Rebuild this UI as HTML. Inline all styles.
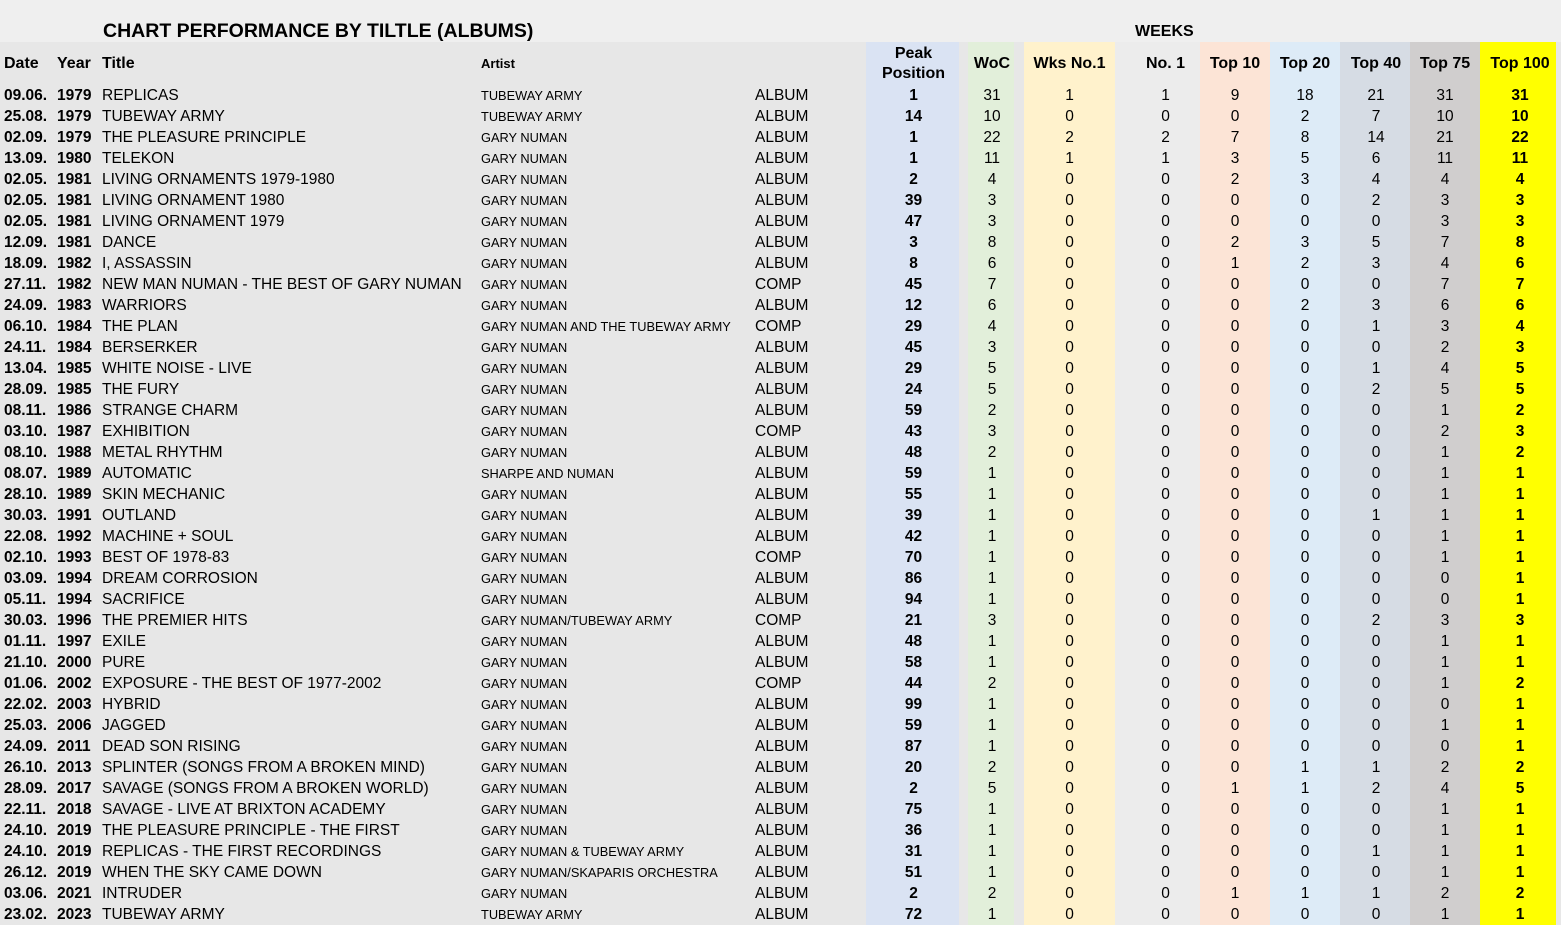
<!DOCTYPE html>
<html><head><meta charset="utf-8">
<style>
html,body{margin:0;padding:0;}
body{width:1561px;height:925px;background:#e7e7e7;position:relative;overflow:hidden;font-family:"Liberation Sans",Arial,sans-serif;color:#000;}
.top{position:absolute;left:0;top:0;width:1561px;height:42px;background:#efefef;}
.ttl{position:absolute;left:103px;top:20px;font-size:19.5px;font-weight:bold;}
.wk{position:absolute;left:1135px;top:23px;font-size:16px;font-weight:bold;}
table{position:absolute;left:0;top:42px;width:1561px;border-collapse:collapse;table-layout:fixed;}
td{padding:0;height:21px;line-height:21px;font-size:15.5px;white-space:nowrap;overflow:visible;text-align:center;}
tr.h td{height:43px;line-height:20px;font-weight:bold;font-size:16px;}
td:nth-child(1){text-align:left;padding-left:4px;font-weight:bold;}
td:nth-child(2){text-align:left;padding-left:2px;font-weight:bold;}
td:nth-child(3){text-align:left;}
td:nth-child(4){text-align:left;font-size:12.8px;}
td:nth-child(5){text-align:left;}
td:nth-child(6){font-weight:bold;padding-left:2px;}
td:nth-child(8){padding-left:2px;}
td:nth-child(11){padding-left:16px;}
td:nth-child(14){padding-left:2px;}
td:nth-child(16){font-weight:bold;padding-left:4px;}
tr.h td:nth-child(4){font-size:13px;}
</style></head><body>
<div class="top"></div>
<div class="ttl">CHART PERFORMANCE BY TILTLE (ALBUMS)</div>
<div class="wk">WEEKS</div>
<table>
<colgroup>
<col style="width:55px"><col style="width:47px"><col style="width:379px"><col style="width:274px"><col style="width:111px">
<col style="width:93px;background:#dae3f3"><col style="width:9px"><col style="width:46px;background:#e2efda"><col style="width:10px">
<col style="width:91px;background:#fff2cc"><col style="width:85px;background:#ececec"><col style="width:70px;background:#fce4d6">
<col style="width:70px;background:#ddebf7"><col style="width:70px;background:#d6dce4"><col style="width:70px;background:#d0cece">
<col style="width:76px;background:#ffff00"><col style="width:5px">
</colgroup>
<tr class="h"><td>Date</td><td>Year</td><td>Title</td><td>Artist</td><td></td><td>Peak<br>Position</td><td></td><td>WoC</td><td></td><td>Wks No.1</td><td>No. 1</td><td>Top 10</td><td>Top 20</td><td>Top 40</td><td>Top 75</td><td>Top 100</td><td></td></tr>
<tr><td>09.06.</td><td>1979</td><td>REPLICAS</td><td>TUBEWAY ARMY</td><td>ALBUM</td><td>1</td><td></td><td>31</td><td></td><td>1</td><td>1</td><td>9</td><td>18</td><td>21</td><td>31</td><td>31</td><td></td></tr>
<tr><td>25.08.</td><td>1979</td><td>TUBEWAY ARMY</td><td>TUBEWAY ARMY</td><td>ALBUM</td><td>14</td><td></td><td>10</td><td></td><td>0</td><td>0</td><td>0</td><td>2</td><td>7</td><td>10</td><td>10</td><td></td></tr>
<tr><td>02.09.</td><td>1979</td><td>THE PLEASURE PRINCIPLE</td><td>GARY NUMAN</td><td>ALBUM</td><td>1</td><td></td><td>22</td><td></td><td>2</td><td>2</td><td>7</td><td>8</td><td>14</td><td>21</td><td>22</td><td></td></tr>
<tr><td>13.09.</td><td>1980</td><td>TELEKON</td><td>GARY NUMAN</td><td>ALBUM</td><td>1</td><td></td><td>11</td><td></td><td>1</td><td>1</td><td>3</td><td>5</td><td>6</td><td>11</td><td>11</td><td></td></tr>
<tr><td>02.05.</td><td>1981</td><td>LIVING ORNAMENTS 1979-1980</td><td>GARY NUMAN</td><td>ALBUM</td><td>2</td><td></td><td>4</td><td></td><td>0</td><td>0</td><td>2</td><td>3</td><td>4</td><td>4</td><td>4</td><td></td></tr>
<tr><td>02.05.</td><td>1981</td><td>LIVING ORNAMENT 1980</td><td>GARY NUMAN</td><td>ALBUM</td><td>39</td><td></td><td>3</td><td></td><td>0</td><td>0</td><td>0</td><td>0</td><td>2</td><td>3</td><td>3</td><td></td></tr>
<tr><td>02.05.</td><td>1981</td><td>LIVING ORNAMENT 1979</td><td>GARY NUMAN</td><td>ALBUM</td><td>47</td><td></td><td>3</td><td></td><td>0</td><td>0</td><td>0</td><td>0</td><td>0</td><td>3</td><td>3</td><td></td></tr>
<tr><td>12.09.</td><td>1981</td><td>DANCE</td><td>GARY NUMAN</td><td>ALBUM</td><td>3</td><td></td><td>8</td><td></td><td>0</td><td>0</td><td>2</td><td>3</td><td>5</td><td>7</td><td>8</td><td></td></tr>
<tr><td>18.09.</td><td>1982</td><td>I, ASSASSIN</td><td>GARY NUMAN</td><td>ALBUM</td><td>8</td><td></td><td>6</td><td></td><td>0</td><td>0</td><td>1</td><td>2</td><td>3</td><td>4</td><td>6</td><td></td></tr>
<tr><td>27.11.</td><td>1982</td><td>NEW MAN NUMAN - THE BEST OF GARY NUMAN</td><td>GARY NUMAN</td><td>COMP</td><td>45</td><td></td><td>7</td><td></td><td>0</td><td>0</td><td>0</td><td>0</td><td>0</td><td>7</td><td>7</td><td></td></tr>
<tr><td>24.09.</td><td>1983</td><td>WARRIORS</td><td>GARY NUMAN</td><td>ALBUM</td><td>12</td><td></td><td>6</td><td></td><td>0</td><td>0</td><td>0</td><td>2</td><td>3</td><td>6</td><td>6</td><td></td></tr>
<tr><td>06.10.</td><td>1984</td><td>THE PLAN</td><td>GARY NUMAN AND THE TUBEWAY ARMY</td><td>COMP</td><td>29</td><td></td><td>4</td><td></td><td>0</td><td>0</td><td>0</td><td>0</td><td>1</td><td>3</td><td>4</td><td></td></tr>
<tr><td>24.11.</td><td>1984</td><td>BERSERKER</td><td>GARY NUMAN</td><td>ALBUM</td><td>45</td><td></td><td>3</td><td></td><td>0</td><td>0</td><td>0</td><td>0</td><td>0</td><td>2</td><td>3</td><td></td></tr>
<tr><td>13.04.</td><td>1985</td><td>WHITE NOISE - LIVE</td><td>GARY NUMAN</td><td>ALBUM</td><td>29</td><td></td><td>5</td><td></td><td>0</td><td>0</td><td>0</td><td>0</td><td>1</td><td>4</td><td>5</td><td></td></tr>
<tr><td>28.09.</td><td>1985</td><td>THE FURY</td><td>GARY NUMAN</td><td>ALBUM</td><td>24</td><td></td><td>5</td><td></td><td>0</td><td>0</td><td>0</td><td>0</td><td>2</td><td>5</td><td>5</td><td></td></tr>
<tr><td>08.11.</td><td>1986</td><td>STRANGE CHARM</td><td>GARY NUMAN</td><td>ALBUM</td><td>59</td><td></td><td>2</td><td></td><td>0</td><td>0</td><td>0</td><td>0</td><td>0</td><td>1</td><td>2</td><td></td></tr>
<tr><td>03.10.</td><td>1987</td><td>EXHIBITION</td><td>GARY NUMAN</td><td>COMP</td><td>43</td><td></td><td>3</td><td></td><td>0</td><td>0</td><td>0</td><td>0</td><td>0</td><td>2</td><td>3</td><td></td></tr>
<tr><td>08.10.</td><td>1988</td><td>METAL RHYTHM</td><td>GARY NUMAN</td><td>ALBUM</td><td>48</td><td></td><td>2</td><td></td><td>0</td><td>0</td><td>0</td><td>0</td><td>0</td><td>1</td><td>2</td><td></td></tr>
<tr><td>08.07.</td><td>1989</td><td>AUTOMATIC</td><td>SHARPE AND NUMAN</td><td>ALBUM</td><td>59</td><td></td><td>1</td><td></td><td>0</td><td>0</td><td>0</td><td>0</td><td>0</td><td>1</td><td>1</td><td></td></tr>
<tr><td>28.10.</td><td>1989</td><td>SKIN MECHANIC</td><td>GARY NUMAN</td><td>ALBUM</td><td>55</td><td></td><td>1</td><td></td><td>0</td><td>0</td><td>0</td><td>0</td><td>0</td><td>1</td><td>1</td><td></td></tr>
<tr><td>30.03.</td><td>1991</td><td>OUTLAND</td><td>GARY NUMAN</td><td>ALBUM</td><td>39</td><td></td><td>1</td><td></td><td>0</td><td>0</td><td>0</td><td>0</td><td>1</td><td>1</td><td>1</td><td></td></tr>
<tr><td>22.08.</td><td>1992</td><td>MACHINE + SOUL</td><td>GARY NUMAN</td><td>ALBUM</td><td>42</td><td></td><td>1</td><td></td><td>0</td><td>0</td><td>0</td><td>0</td><td>0</td><td>1</td><td>1</td><td></td></tr>
<tr><td>02.10.</td><td>1993</td><td>BEST OF 1978-83</td><td>GARY NUMAN</td><td>COMP</td><td>70</td><td></td><td>1</td><td></td><td>0</td><td>0</td><td>0</td><td>0</td><td>0</td><td>1</td><td>1</td><td></td></tr>
<tr><td>03.09.</td><td>1994</td><td>DREAM CORROSION</td><td>GARY NUMAN</td><td>ALBUM</td><td>86</td><td></td><td>1</td><td></td><td>0</td><td>0</td><td>0</td><td>0</td><td>0</td><td>0</td><td>1</td><td></td></tr>
<tr><td>05.11.</td><td>1994</td><td>SACRIFICE</td><td>GARY NUMAN</td><td>ALBUM</td><td>94</td><td></td><td>1</td><td></td><td>0</td><td>0</td><td>0</td><td>0</td><td>0</td><td>0</td><td>1</td><td></td></tr>
<tr><td>30.03.</td><td>1996</td><td>THE PREMIER HITS</td><td>GARY NUMAN/TUBEWAY ARMY</td><td>COMP</td><td>21</td><td></td><td>3</td><td></td><td>0</td><td>0</td><td>0</td><td>0</td><td>2</td><td>3</td><td>3</td><td></td></tr>
<tr><td>01.11.</td><td>1997</td><td>EXILE</td><td>GARY NUMAN</td><td>ALBUM</td><td>48</td><td></td><td>1</td><td></td><td>0</td><td>0</td><td>0</td><td>0</td><td>0</td><td>1</td><td>1</td><td></td></tr>
<tr><td>21.10.</td><td>2000</td><td>PURE</td><td>GARY NUMAN</td><td>ALBUM</td><td>58</td><td></td><td>1</td><td></td><td>0</td><td>0</td><td>0</td><td>0</td><td>0</td><td>1</td><td>1</td><td></td></tr>
<tr><td>01.06.</td><td>2002</td><td>EXPOSURE - THE BEST OF 1977-2002</td><td>GARY NUMAN</td><td>COMP</td><td>44</td><td></td><td>2</td><td></td><td>0</td><td>0</td><td>0</td><td>0</td><td>0</td><td>1</td><td>2</td><td></td></tr>
<tr><td>22.02.</td><td>2003</td><td>HYBRID</td><td>GARY NUMAN</td><td>ALBUM</td><td>99</td><td></td><td>1</td><td></td><td>0</td><td>0</td><td>0</td><td>0</td><td>0</td><td>0</td><td>1</td><td></td></tr>
<tr><td>25.03.</td><td>2006</td><td>JAGGED</td><td>GARY NUMAN</td><td>ALBUM</td><td>59</td><td></td><td>1</td><td></td><td>0</td><td>0</td><td>0</td><td>0</td><td>0</td><td>1</td><td>1</td><td></td></tr>
<tr><td>24.09.</td><td>2011</td><td>DEAD SON RISING</td><td>GARY NUMAN</td><td>ALBUM</td><td>87</td><td></td><td>1</td><td></td><td>0</td><td>0</td><td>0</td><td>0</td><td>0</td><td>0</td><td>1</td><td></td></tr>
<tr><td>26.10.</td><td>2013</td><td>SPLINTER (SONGS FROM A BROKEN MIND)</td><td>GARY NUMAN</td><td>ALBUM</td><td>20</td><td></td><td>2</td><td></td><td>0</td><td>0</td><td>0</td><td>1</td><td>1</td><td>2</td><td>2</td><td></td></tr>
<tr><td>28.09.</td><td>2017</td><td>SAVAGE (SONGS FROM A BROKEN WORLD)</td><td>GARY NUMAN</td><td>ALBUM</td><td>2</td><td></td><td>5</td><td></td><td>0</td><td>0</td><td>1</td><td>1</td><td>2</td><td>4</td><td>5</td><td></td></tr>
<tr><td>22.11.</td><td>2018</td><td>SAVAGE - LIVE AT BRIXTON ACADEMY</td><td>GARY NUMAN</td><td>ALBUM</td><td>75</td><td></td><td>1</td><td></td><td>0</td><td>0</td><td>0</td><td>0</td><td>0</td><td>1</td><td>1</td><td></td></tr>
<tr><td>24.10.</td><td>2019</td><td>THE PLEASURE PRINCIPLE - THE FIRST</td><td>GARY NUMAN</td><td>ALBUM</td><td>36</td><td></td><td>1</td><td></td><td>0</td><td>0</td><td>0</td><td>0</td><td>0</td><td>1</td><td>1</td><td></td></tr>
<tr><td>24.10.</td><td>2019</td><td>REPLICAS - THE FIRST RECORDINGS</td><td>GARY NUMAN &amp; TUBEWAY ARMY</td><td>ALBUM</td><td>31</td><td></td><td>1</td><td></td><td>0</td><td>0</td><td>0</td><td>0</td><td>1</td><td>1</td><td>1</td><td></td></tr>
<tr><td>26.12.</td><td>2019</td><td>WHEN THE SKY CAME DOWN</td><td>GARY NUMAN/SKAPARIS ORCHESTRA</td><td>ALBUM</td><td>51</td><td></td><td>1</td><td></td><td>0</td><td>0</td><td>0</td><td>0</td><td>0</td><td>1</td><td>1</td><td></td></tr>
<tr><td>03.06.</td><td>2021</td><td>INTRUDER</td><td>GARY NUMAN</td><td>ALBUM</td><td>2</td><td></td><td>2</td><td></td><td>0</td><td>0</td><td>1</td><td>1</td><td>1</td><td>2</td><td>2</td><td></td></tr>
<tr><td>23.02.</td><td>2023</td><td>TUBEWAY ARMY</td><td>TUBEWAY ARMY</td><td>ALBUM</td><td>72</td><td></td><td>1</td><td></td><td>0</td><td>0</td><td>0</td><td>0</td><td>0</td><td>1</td><td>1</td><td></td></tr>
</table>
</body></html>
